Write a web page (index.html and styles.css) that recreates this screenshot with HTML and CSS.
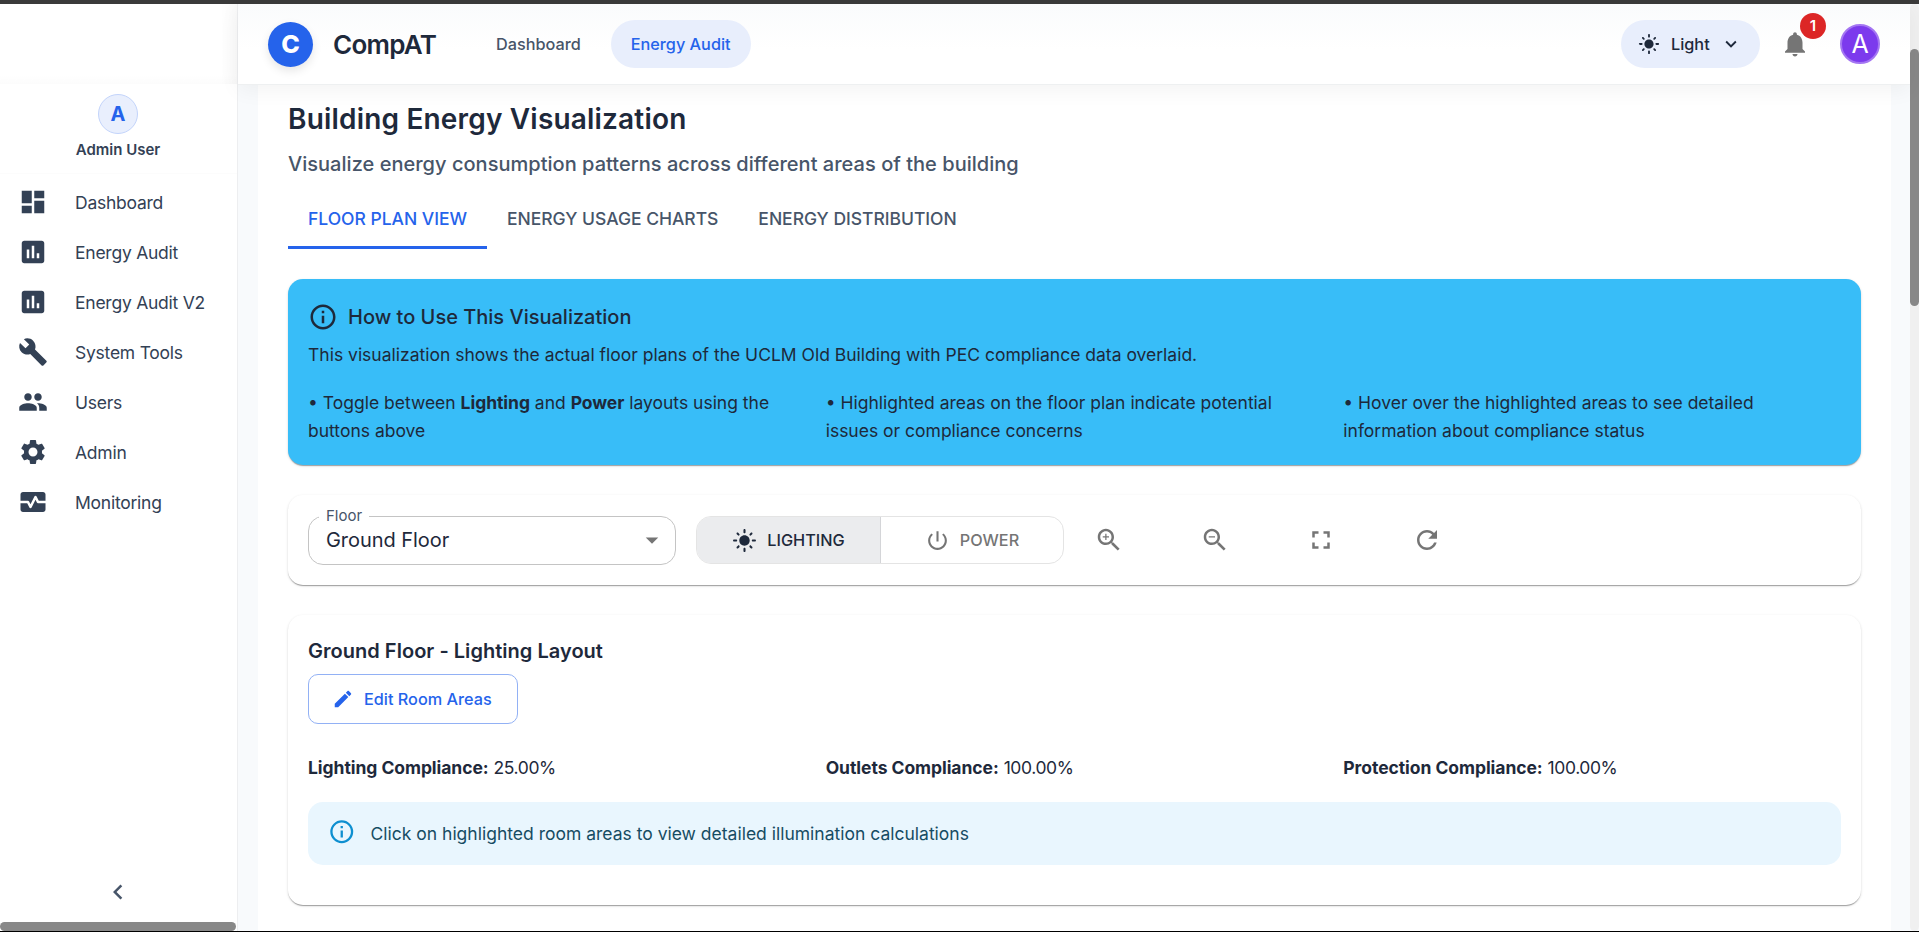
FILE: index.html
```html
<!DOCTYPE html>
<html lang="en">
<head>
<meta charset="utf-8">
<title>CompAT - Energy Audit</title>
<link rel="stylesheet" href="styles.css">
</head>
<body>
<svg class="defs" width="0" height="0" aria-hidden="true">
  <symbol id="dash" viewBox="0 0 24 24"><path d="M3 13h8V3H3v10zm0 8h8v-6H3v6zm10 0h8V11h-8v10zm0-18v6h8V3h-8z"/></symbol>
  <symbol id="chart" viewBox="0 0 24 24"><path d="M19 3H5c-1.1 0-2 .9-2 2v14c0 1.1.9 2 2 2h14c1.1 0 2-.9 2-2V5c0-1.1-.9-2-2-2zM9 17H7v-7h2v7zm4 0h-2V7h2v10zm4 0h-2v-4h2v4z"/></symbol>
  <symbol id="build" viewBox="0 0 24 24"><path d="m22.7 19-9.1-9.1c.9-2.300.4-5-1.500-6.900-2-2-5-2.400-7.400-1.300L9 6 6 9 1.600 4.700C.4 7.100.9 10.100 2.900 12.100c1.900 1.900 4.600 2.400 6.900 1.500l9.100 9.100c.4.4 1 .4 1.400 0l2.300-2.300c.5-.4.5-1.100.1-1.400z"/></symbol>
  <symbol id="people" viewBox="0 0 24 24"><path d="M16 11c1.660 0 2.990-1.340 2.990-3S17.660 5 16 5c-1.660 0-3 1.340-3 3s1.340 3 3 3zm-8 0c1.660 0 2.990-1.340 2.990-3S9.660 5 8 5C6.340 5 5 6.340 5 8s1.340 3 3 3zm0 2c-2.330 0-7 1.170-7 3.500V19h14v-2.500c0-2.330-4.670-3.500-7-3.500zm8 0c-.29 0-.62.02-.97.05 1.160.84 1.970 1.970 1.970 3.450V19h6v-2.500c0-2.330-4.670-3.500-7-3.500z"/></symbol>
  <symbol id="gear" viewBox="0 0 24 24"><path d="M19.140 12.940c.04-.3.06-.61.06-.94 0-.32-.02-.64-.07-.94l2.030-1.580c.18-.14.23-.41.12-.61l-1.920-3.320c-.12-.22-.37-.29-.59-.22l-2.390.96c-.5-.38-1.030-.7-1.620-.94l-.36-2.540c-.04-.24-.24-.41-.48-.41h-3.840c-.24 0-.43.17-.47.41l-.36 2.540c-.59.24-1.130.57-1.620.94l-2.390-.96c-.22-.08-.47 0-.59.22L2.740 8.870c-.12.21-.08.47.12.61l2.030 1.580c-.05.3-.09.63-.09.94s.02.64.07.94l-2.030 1.580c-.18.14-.23.41-.12.61l1.920 3.320c.12.22.37.29.59.22l2.390-.96c.5.38 1.030.7 1.620.94l.36 2.540c.05.24.24.41.48.41h3.840c.24 0 .44-.17.47-.41l.36-2.540c.59-.24 1.130-.56 1.620-.94l2.390.96c.22.08.47 0 .59-.22l1.920-3.320c.12-.22.07-.47-.12-.61l-2.010-1.580zM12 15.600c-1.980 0-3.600-1.620-3.600-3.600s1.620-3.600 3.600-3.600 3.600 1.620 3.600 3.600-1.620 3.600-3.600 3.600z"/></symbol>
  <symbol id="monitor" viewBox="0 0 24 24"><path d="M15.110 12.450 14 10.240l-3.110 6.210c-.16.34-.51.55-.89.55s-.73-.21-.89-.55L7.380 13H2v5c0 1.100.9 2 2 2h16c1.100 0 2-.9 2-2v-5h-6c-.38 0-.73-.21-.89-.55z"/><path d="M20 4H4c-1.100 0-2 .9-2 2v5h6c.38 0 .73.21.89.55L10 13.760l3.110-6.210c.34-.68 1.450-.68 1.790 0L16.620 11H22V6c0-1.100-.9-2-2-2z"/></symbol>
  <symbol id="left" viewBox="0 0 24 24"><path d="M15.410 7.410 14 6l-6 6 6 6 1.410-1.410L10.830 12z"/></symbol>
  <symbol id="down" viewBox="0 0 24 24"><path d="M7.410 8.590 12 13.170l4.590-4.580L18 10l-6 6-6-6 1.410-1.410z"/></symbol>
  <symbol id="caret" viewBox="0 0 24 24"><path d="m7 10 5 5 5-5z"/></symbol>
  <symbol id="sun" viewBox="0 0 24 24"><path d="M12 7c-2.760 0-5 2.240-5 5s2.240 5 5 5 5-2.240 5-5-2.240-5-5-5zM2 13h2c.55 0 1-.45 1-1s-.45-1-1-1H2c-.55 0-1 .45-1 1s.45 1 1 1zm18 0h2c.55 0 1-.45 1-1s-.45-1-1-1h-2c-.55 0-1 .45-1 1s.45 1 1 1zM11 2v2c0 .55.45 1 1 1s1-.45 1-1V2c0-.55-.45-1-1-1s-1 .45-1 1zm0 18v2c0 .55.45 1 1 1s1-.45 1-1v-2c0-.55-.45-1-1-1s-1 .45-1 1zM5.990 4.580c-.39-.39-1.030-.39-1.410 0-.39.39-.39 1.030 0 1.410l1.060 1.060c.39.39 1.030.39 1.410 0s.39-1.030 0-1.410L5.990 4.580zm12.370 12.370c-.39-.39-1.030-.39-1.410 0-.39.39-.39 1.030 0 1.410l1.060 1.060c.39.39 1.030.39 1.410 0 .39-.39.39-1.030 0-1.410l-1.060-1.060zm1.060-10.960c.39-.39.39-1.030 0-1.410-.39-.39-1.030-.39-1.410 0l-1.060 1.060c-.39.39-.39 1.030 0 1.410s1.030.39 1.410 0l1.060-1.060zM7.050 18.360c.39-.39.39-1.030 0-1.410-.39-.39-1.030-.39-1.410 0l-1.060 1.060c-.39.39-.39 1.030 0 1.410s1.030.39 1.410 0l1.060-1.060z"/></symbol>
  <symbol id="bell" viewBox="0 0 24 24"><path d="M12 22c1.100 0 2-.9 2-2h-4c0 1.100.89 2 2 2zm6-6v-5c0-3.070-1.640-5.640-4.500-6.320V4c0-.83-.67-1.500-1.500-1.500s-1.500.67-1.500 1.500v.68C7.630 5.360 6 7.920 6 11v5l-2 2v1h16v-1l-2-2z"/></symbol>
  <symbol id="info" viewBox="0 0 24 24"><path d="M11 7h2v2h-2zm0 4h2v6h-2zm1-9C6.480 2 2 6.480 2 12s4.480 10 10 10 10-4.480 10-10S17.520 2 12 2zm0 18c-4.410 0-8-3.590-8-8s3.590-8 8-8 8 3.590 8 8-3.590 8-8 8z"/></symbol>
  <symbol id="infothin" viewBox="0 0 24 24"><path d="M11,9H13V7H11M12,20C7.590,20 4,16.410 4,12C4,7.590 7.590,4 12,4C16.410,4 20,7.590 20,12C20,16.410 16.410,20 12,20M12,2A10,10 0 0,0 2,12A10,10 0 0,0 12,22A10,10 0 0,0 22,12A10,10 0 0,0 12,2M11,17H13V11H11V17Z"/></symbol>
  <symbol id="power" viewBox="0 0 24 24"><path d="M13 3h-2v10h2V3zm4.830 2.170-1.420 1.420C17.990 7.860 19 9.810 19 12c0 3.870-3.130 7-7 7s-7-3.130-7-7c0-2.190 1.010-4.140 2.580-5.420L6.170 5.170C4.230 6.820 3 9.260 3 12c0 4.970 4.030 9 9 9s9-4.030 9-9c0-2.740-1.230-5.180-3.170-6.830z"/></symbol>
  <symbol id="glass" viewBox="0 0 24 24"><path d="M15.500 14h-.79l-.28-.27C15.410 12.590 16 11.110 16 9.500 16 5.910 13.090 3 9.500 3S3 5.910 3 9.500 5.910 16 9.500 16c1.610 0 3.090-.59 4.230-1.570l.27.28v.79l5 4.990L20.490 19l-4.990-5zm-6 0C7.010 14 5 11.990 5 9.500S7.010 5 9.500 5 14 7.010 14 9.500 11.990 14 9.500 14z"/></symbol>
  <symbol id="full" viewBox="0 0 24 24"><path d="M7 14H5v5h5v-2H7v-3zm-2-4h2V7h3V5H5v5zm12 7h-3v2h5v-5h-2v3zM14 5v2h3v3h2V5h-5z"/></symbol>
  <symbol id="refresh" viewBox="0 0 24 24"><path d="M17.650 6.350C16.200 4.900 14.210 4 12 4c-4.420 0-7.990 3.580-7.990 8s3.570 8 7.990 8c3.730 0 6.840-2.550 7.730-6h-2.080c-.82 2.330-3.040 4-5.650 4-3.310 0-6-2.690-6-6s2.690-6 6-6c1.660 0 3.140.69 4.220 1.780L13 11h7V4l-2.350 2.350z"/></symbol>
  <symbol id="pen" viewBox="0 0 24 24"><path d="M3 17.250V21h3.750L17.810 9.940l-3.750-3.750L3 17.250zM20.710 7.040c.39-.39.39-1.020 0-1.410l-2.340-2.340c-.39-.39-1.020-.39-1.410 0l-1.830 1.830 3.750 3.750 1.830-1.830z"/></symbol>
</svg>
<div class="window">
  <aside class="sidebar">
    <div class="side-top"></div>
    <div class="profile">
      <div class="profile-avatar">A</div>
      <div class="profile-name">Admin User</div>
    </div>
    <nav class="side-nav">
      <a class="side-item"><svg><use href="#dash"/></svg><span>Dashboard</span></a>
      <a class="side-item"><svg><use href="#chart"/></svg><span>Energy Audit</span></a>
      <a class="side-item"><svg><use href="#chart"/></svg><span>Energy Audit V2</span></a>
      <a class="side-item"><svg><use href="#build"/></svg><span>System Tools</span></a>
      <a class="side-item"><svg><use href="#people"/></svg><span>Users</span></a>
      <a class="side-item"><svg><use href="#gear"/></svg><span>Admin</span></a>
      <a class="side-item"><svg><use href="#monitor"/></svg><span>Monitoring</span></a>
    </nav>
    <div class="collapse"><svg><use href="#left"/></svg></div>
    <div class="hscroll"></div>
  </aside>
  <div class="right">
    <header class="appbar">
      <div class="logo">C</div>
      <div class="brand">CompAT</div>
      <a class="top-link">Dashboard</a>
      <a class="top-link active">Energy Audit</a>
      <div class="spacer"></div>
      <div class="theme"><svg class="theme-sun"><use href="#sun"/></svg><span>Light</span><svg class="theme-down"><use href="#down"/></svg></div>
      <div class="bell"><svg><use href="#bell"/></svg><span class="badge">1</span></div>
      <div class="user">A</div>
    </header>
    <main class="page">
      <h1 class="title">Building Energy Visualization</h1>
      <p class="subtitle">Visualize energy consumption patterns across different areas of the building</p>
      <div class="tabs">
        <div class="tab selected">FLOOR PLAN VIEW</div>
        <div class="tab">ENERGY USAGE CHARTS</div>
        <div class="tab">ENERGY DISTRIBUTION</div>
      </div>
      <section class="card howto">
        <div class="howto-head"><svg><use href="#info"/></svg><h2>How to Use This Visualization</h2></div>
        <p class="howto-desc">This visualization shows the actual floor plans of the UCLM Old Building with PEC compliance data overlaid.</p>
        <div class="thirds howto-tips">
          <p>• Toggle between <b>Lighting</b> and <b>Power</b> layouts using the buttons above</p>
          <p>• Highlighted areas on the floor plan indicate potential issues or compliance concerns</p>
          <p>• Hover over the highlighted areas to see detailed information about compliance status</p>
        </div>
      </section>
      <section class="card controls">
        <fieldset class="select">
          <legend>Floor</legend>
          <div class="select-row"><span>Ground Floor</span><svg><use href="#caret"/></svg></div>
        </fieldset>
        <div class="toggle">
          <div class="toggle-btn on"><svg><use href="#sun"/></svg><span>LIGHTING</span></div>
          <div class="toggle-btn"><svg><use href="#power"/></svg><span>POWER</span></div>
        </div>
        <div class="tools">
          <svg viewBox="0 0 24 24"><use href="#glass"/><path d="M12 10h-2v2H9v-2H7V9h2V7h1v2h2v1z"/></svg>
          <svg viewBox="0 0 24 24"><use href="#glass"/><path d="M7 9h5v1H7z"/></svg>
          <svg><use href="#full"/></svg>
          <svg><use href="#refresh"/></svg>
        </div>
      </section>
      <section class="card layout">
        <h2 class="layout-title">Ground Floor - Lighting Layout</h2>
        <div class="edit"><svg><use href="#pen"/></svg><span>Edit Room Areas</span></div>
        <div class="thirds stats">
          <p><b>Lighting Compliance:</b> <span>25.00%</span></p>
          <p><b>Outlets Compliance:</b> <span>100.00%</span></p>
          <p><b>Protection Compliance:</b> <span>100.00%</span></p>
        </div>
        <div class="alert"><svg><use href="#infothin"/></svg><span>Click on highlighted room areas to view detailed illumination calculations</span></div>
      </section>
    </main>
  </div>
  <div class="vscroll"><div class="vthumb"></div></div>
</div>
</body>
</html>
```

FILE: styles.css
```css
* { box-sizing: border-box; margin: 0; padding: 0; }
body { width: 1919px; height: 932px; overflow: hidden; background: #f8fafc; font-family: Inter, "Liberation Sans", sans-serif; color: #1e293b; }
svg { display: block; fill: currentColor; flex: none; width: 30px; height: 30px; }
svg.defs { position: absolute; width: 0; height: 0; }
.window { display: flex; height: 932px; border-top: 4px solid #3a3a3a; border-bottom: 1px solid #000; }

.sidebar { width: 238px; flex: none; display: flex; flex-direction: column; background: #fff; border-right: 1px solid #edeef0; }
.side-top { height: 80px; flex: none; background: linear-gradient(90deg, transparent 220px, rgba(0,0,0,.018)), linear-gradient(transparent 70px, rgba(0,0,0,.012)); }
.profile { height: 90px; flex: none; padding: 10px 1px 0 0; display: flex; flex-direction: column; align-items: center; border-bottom: 1px solid #fcfcfc; }
.profile-avatar { width: 40px; height: 40px; border-radius: 50%; background: #e9effd; border: 1px solid #c3d4fb; color: #2563eb; font-size: 20px; font-weight: 700; line-height: 39px; text-align: center; }
.profile-name { margin-top: 4px; font-size: 15px; font-weight: 600; line-height: 24px; color: #334155; }
.side-nav { padding-top: 3px; }
.side-item { display: flex; align-items: center; height: 50px; padding-left: 18px; gap: 27px; color: #334155; font-size: 17.5px; letter-spacing: -.24px; }
.collapse { margin-top: auto; height: 60px; padding-right: 2px; display: flex; align-items: center; justify-content: center; color: #475569; }
.hscroll { width: 236px; height: 9px; border-radius: 5px; background: #888; }

.right { flex: 1; min-width: 0; display: flex; flex-direction: column; }
.appbar { height: 81px; flex: none; display: flex; align-items: center; padding: 0 30px; background: linear-gradient(#fafbfc, #fff 45px); border-bottom: 1px solid #eef0f1; box-shadow: 0 5px 20px rgba(0,0,0,.05); z-index: 1; }
.logo { width: 45px; height: 45px; border-radius: 50%; background: #2563eb; color: #fff; font-size: 25px; font-weight: 800; line-height: 45px; text-align: center; box-shadow: 0 4px 10px rgba(0,0,0,.1); }
.brand { margin-left: 20px; width: 133px; font-size: 26px; font-weight: 600; letter-spacing: -.75px; color: #1e293b; }
.top-link { height: 48px; padding: 0 20px; margin-left: 10px; border-radius: 24px; line-height: 48px; font-size: 16.25px; font-weight: 500; color: #475569; }
.top-link.active { background: #e8eefc; color: #2563eb; }
.spacer { flex: 1; }
.theme { width: 139px; height: 48px; border-radius: 24px; background: #e8eefc; display: flex; align-items: center; padding-left: 17px; font-size: 16.25px; font-weight: 500; }
.theme-sun { width: 22px; height: 22px; margin-right: 11px; }
.theme-down { width: 22px; height: 22px; margin-left: 10px; }
.bell { position: relative; width: 30px; height: 30px; margin: 0 30px 0 20px; color: #757575; }
.badge { position: absolute; left: 20px; top: -16px; width: 26px; height: 26px; border-radius: 50%; background: #dc2626; color: #fff; font-size: 15px; font-weight: 600; line-height: 26px; text-align: center; }
.user { width: 40px; height: 40px; border-radius: 50%; background: #7c3aed; border: 2px solid #a476f2; color: #fff; font-size: 25px; line-height: 36px; text-align: center; }

.page { flex: 1; margin: 0 19px 0 20px; padding: 14px 30px 0; background: #fff; overflow: hidden; }
.title { font-size: 28px; line-height: 40px; font-weight: 600; letter-spacing: .18px; }
.subtitle { margin-top: 10px; font-size: 20px; line-height: 30px; font-weight: 500; letter-spacing: .025px; color: #475569; }
.tabs { display: flex; height: 60px; margin-top: 10px; }
.tab { padding: 0 20px; font-size: 17.5px; line-height: 60px; font-weight: 500; letter-spacing: -.02px; color: #475569; }
.tab.selected { color: #2563eb; border-bottom: 3px solid #2563eb; }
.card { background: #fff; border-radius: 15px; padding: 20px; box-shadow: 0 2px 1px -1px rgba(0,0,0,.2), 0 1px 1px rgba(0,0,0,.14), 0 1px 3px rgba(0,0,0,.12); }
.thirds { display: grid; grid-template-columns: repeat(3, 1fr); column-gap: 20px; }
.howto { height: 186px; margin-top: 30px; background: #38bdf8; font-size: 17.5px; }
.howto-head { display: flex; align-items: center; gap: 10px; height: 35px; }
.howto-head h2 { font-size: 20px; font-weight: 500; }
.howto-desc { line-height: 25px; margin-top: 8px; }
.howto-tips { margin-top: 22px; line-height: 28px; }
.howto-tips b { font-weight: 700; letter-spacing: -.05px; }
.controls { height: 90px; margin-top: 30px; display: flex; align-items: flex-start; }
.select { width: 368px; height: 58px; margin-top: -8px; border: 1px solid #c4c4c4; border-radius: 15px; padding: 0 8px 0 17px; }
.select legend { margin-left: -7px; padding: 0 7px; font-size: 15px; line-height: 18px; color: #475569; }
.select-row { display: flex; justify-content: space-between; align-items: center; height: 30px; font-size: 20px; letter-spacing: -.05px; }
.select-row svg { color: #757575; }
.toggle { display: grid; grid-template-columns: 184px 184px; width: 368px; height: 48px; margin: 1px 0 0 20px; border: 1px solid #e4e4e4; border-radius: 15px; overflow: hidden; color: #757575; font-size: 16.25px; font-weight: 500; }
.toggle-btn { display: flex; align-items: center; justify-content: center; gap: 10px; padding-right: 2px; }
.toggle-btn svg { width: 25px; height: 25px; }
.toggle-btn.on { padding-right: 0; background: #ebecee; color: #1e293b; border-right: 1px solid #d4d5d8; }
.tools { display: flex; gap: 76px; margin: 10px 0 0 30px; color: #757575; }
.layout { height: 290px; margin-top: 30px; }
.layout-title { font-size: 20px; line-height: 32px; font-weight: 600; letter-spacing: .03px; }
.edit { display: flex; align-items: center; width: 210px; height: 50px; margin-top: 7px; padding-left: 23px; border: 1px solid #92b1f5; border-radius: 10px; color: #2563eb; font-size: 16.25px; font-weight: 500; gap: 10px; }
.edit svg { width: 22px; height: 22px; }
.stats { margin-top: 30px; font-size: 17.5px; line-height: 28px; }
.stats b { font-weight: 700; letter-spacing: -.05px; }
.stats span { letter-spacing: -.4px; }
.alert { display: flex; align-items: center; height: 63px; margin-top: 20px; padding-left: 20px; border-radius: 15px; background: #e9f6fe; color: #164c63; font-size: 17.5px; gap: 15px; }
.alert svg { width: 27.5px; height: 27.5px; color: #0e8fd0; margin-top: -3px; }

.vscroll { width: 9px; flex: none; background: #f0f0f0; border-radius: 5px; padding-top: 45px; }
.vthumb { height: 257px; border-radius: 5px; background: #888; }
```
